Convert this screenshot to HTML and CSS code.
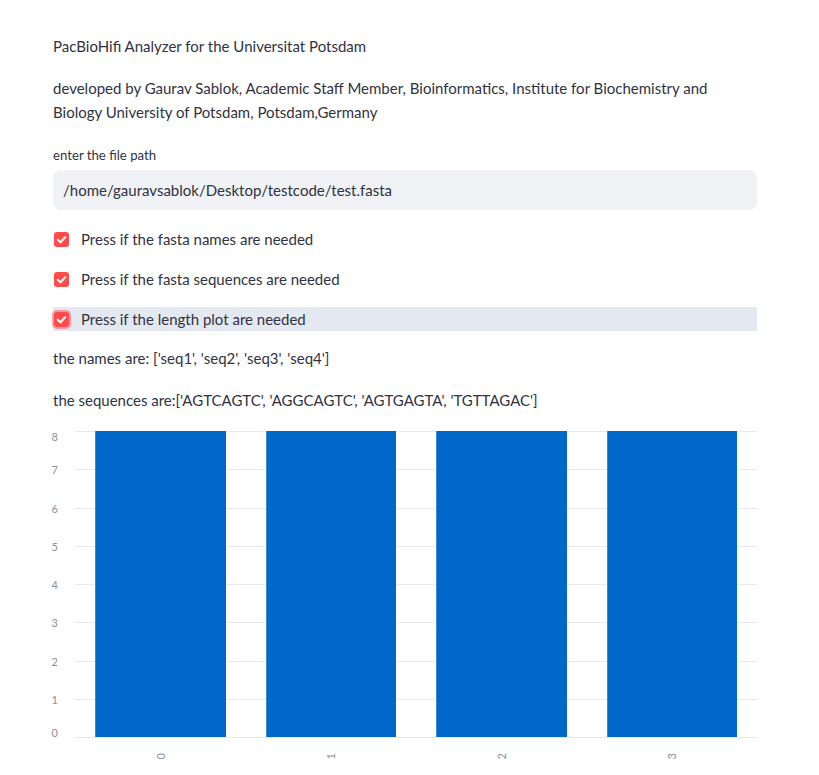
FILE: index.html
```html
<!DOCTYPE html>
<html lang="en">
<head>
<meta charset="utf-8">
<title>PacBioHifi Analyzer</title>
<link rel="stylesheet" href="styles.css">
</head>
<body>
<main class="main">
  <p class="text title">PacBioHifi Analyzer for the Universitat Potsdam</p>
  <p class="text dev">developed by Gaurav Sablok, Academic Staff Member, Bioinformatics, Institute for Biochemistry and Biology University of Potsdam, Potsdam,Germany</p>

  <div class="field">
    <label class="field-label">enter the file path</label>
    <div class="input">/home/gauravsablok/Desktop/testcode/test.fasta</div>
  </div>

  <div class="checks">
    <div class="check-row">
      <span class="box"><svg viewBox="0 0 16 16" width="15" height="15"><polyline points="4,8.2 7,11 12,5.5" fill="none" stroke="#fff" stroke-width="2.2" stroke-linecap="round" stroke-linejoin="round"/></svg></span>
      <span class="check-label">Press if the fasta names are needed</span>
    </div>
    <div class="check-row">
      <span class="box"><svg viewBox="0 0 16 16" width="15" height="15"><polyline points="4,8.2 7,11 12,5.5" fill="none" stroke="#fff" stroke-width="2.2" stroke-linecap="round" stroke-linejoin="round"/></svg></span>
      <span class="check-label">Press if the fasta sequences are needed</span>
    </div>
    <div class="check-row hover">
      <span class="box focus"><svg viewBox="0 0 16 16" width="15" height="15"><polyline points="4,8.2 7,11 12,5.5" fill="none" stroke="#fff" stroke-width="2.2" stroke-linecap="round" stroke-linejoin="round"/></svg></span>
      <span class="check-label">Press if the length plot are needed</span>
    </div>
  </div>

  <p class="text names">the names are: ['seq1', 'seq2', 'seq3', 'seq4']</p>
  <p class="text seqs">the sequences are:['AGTCAGTC', 'AGGCAGTC', 'AGTGAGTA', 'TGTTAGAC']</p>

  <div class="chart">
    <div class="chart-body">
      <div class="yaxis">
        <div class="ytick top"><span>8</span></div>
        <div class="ytick"><span>7</span></div>
        <div class="ytick"><span>6</span></div>
        <div class="ytick"><span>5</span></div>
        <div class="ytick"><span>4</span></div>
        <div class="ytick"><span>3</span></div>
        <div class="ytick"><span>2</span></div>
        <div class="ytick"><span>1</span></div>
        <div class="ytick bottom"><span>0</span></div>
      </div>
      <div class="plot">
        <div class="grid">
          <div class="gline"></div><div class="gline"></div><div class="gline"></div>
          <div class="gline"></div><div class="gline"></div><div class="gline"></div>
          <div class="gline"></div><div class="gline"></div><div class="gline"></div>
        </div>
        <div class="bars">
          <div class="band"><div class="bar" style="height:100%"></div></div>
          <div class="band"><div class="bar" style="height:100%"></div></div>
          <div class="band"><div class="bar" style="height:100%"></div></div>
          <div class="band"><div class="bar" style="height:100%"></div></div>
        </div>
      </div>
    </div>
    <div class="xaxis">
      <div class="xtick"><span>0</span></div>
      <div class="xtick"><span>1</span></div>
      <div class="xtick"><span>2</span></div>
      <div class="xtick"><span>3</span></div>
    </div>
  </div>
</main>
</body>
</html>
```

FILE: styles.css
```css
html, body {
  margin: 0;
  padding: 0;
  background: #ffffff;
}

body {
  font-family: "Source Sans Pro", Lato, "Noto Sans", sans-serif;
  color: #31333f;
  font-size: 15px;
  line-height: 24px;
}

.main {
  width: 704px;
  margin-left: 53px;
  padding-top: 34px;
  display: flex;
  flex-direction: column;
}

.text {
  margin: 0;
}

.dev {
  margin-top: 18px;
}

.field {
  margin-top: 22px;
  display: flex;
  flex-direction: column;
}

.field-label {
  font-size: 13.2px;
  line-height: 18px;
  height: 18px;
  margin-bottom: 6px;
}

.input {
  height: 40px;
  box-sizing: border-box;
  background: #f0f2f6;
  border-radius: 8px;
  padding: 0 10px;
  display: flex;
  align-items: center;
  font-size: 15px;
}

.checks {
  margin-top: 17px;
  display: flex;
  flex-direction: column;
  gap: 16px;
}

.check-row {
  height: 24px;
  display: flex;
  align-items: center;
}

.check-row.hover {
  background: #e4e8f0;
}

.box {
  width: 15px;
  height: 15px;
  margin-left: 1px;
  margin-right: 12px;
  background: #ff4b4b;
  border-radius: 3px;
  display: flex;
  align-items: center;
  justify-content: center;
}

.box.focus {
  box-shadow: 0 0 0 2px rgba(255, 75, 75, 0.5);
}

.names {
  margin-top: 15px;
}

.seqs {
  margin-top: 18px;
}

.chart {
  margin-top: 19px;
  display: flex;
  flex-direction: column;
}

.chart-body {
  display: flex;
}

.yaxis {
  width: 22px;
  box-sizing: border-box;
  padding-right: 17px;
  height: 307px;
  display: flex;
  flex-direction: column;
  justify-content: space-between;
  font-size: 11px;
  line-height: 11px;
  color: #8b8fa0;
}

.ytick {
  height: 1px;
  display: flex;
  align-items: center;
  justify-content: flex-end;
}

.ytick.top {
  align-items: flex-start;
}

.ytick.bottom {
  align-items: flex-end;
}

.plot {
  position: relative;
  width: 682px;
  height: 307px;
}

.grid {
  height: 100%;
  display: flex;
  flex-direction: column;
  justify-content: space-between;
}

.gline {
  height: 1px;
  background: #e6e9ef;
}

.bars {
  position: absolute;
  inset: 0 0 1px 0;
  display: flex;
  align-items: flex-end;
}

.band {
  flex: 1;
  height: 100%;
  padding: 0 20px;
  display: flex;
  align-items: flex-end;
}

.bar {
  width: 100%;
  background: #0068c9;
  box-shadow: inset 1px 0 0 #3d8ad6;
}

.xaxis {
  margin-left: 22px;
  width: 682px;
  display: flex;
  padding-top: 15px;
}

.xtick {
  flex: 1;
  display: flex;
  justify-content: center;
  font-size: 11px;
  line-height: 11px;
  color: #8b8fa0;
}

.xtick span {
  writing-mode: vertical-rl;
  transform: rotate(180deg);
}
```
